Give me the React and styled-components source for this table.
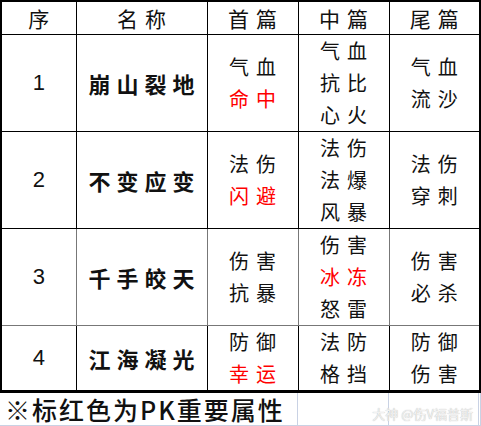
import React from 'react';
import styled, { createGlobalStyle } from 'styled-components';

const GlobalStyle = createGlobalStyle`
  html, body {
    margin: 0;
    padding: 0;
    background: #fff;
  }
  body {
    font-family: "Noto Sans CJK SC", sans-serif;
    color: #111;
  }
`;

const Sheet = styled.div`
  width: 481px;
  height: 426px;
  display: flex;
  flex-direction: column;
  overflow: hidden;
  background: #fff;
`;

const Table = styled.table`
  border-collapse: collapse;
  table-layout: fixed;
  width: 479px;
  flex: none;
  border: 2px solid #000;
  border-bottom-width: 3px;
`;

const Col = styled.col`
  width: ${(p) => p.$w}px;
`;

const Row = styled.tr`
  height: ${(p) => p.$h}px;
`;

const Cell = styled.td`
  border: 1px solid ${(p) => (p.$soft ? '#777' : '#000')};
  padding: 0 0 0 ${(p) => p.$gap}px;
  text-align: center;
  vertical-align: middle;
  font-family: "Noto Sans CJK SC", sans-serif;
  font-size: ${(p) => p.$size}px;
  font-weight: ${(p) => p.$weight};
  letter-spacing: ${(p) => p.$gap}px;
  line-height: 32px;
  color: #111;
`;

const HeadCell = styled(Cell).attrs({ as: 'th' })``;

const Num = styled(Cell)`
  font-family: "Liberation Sans", Arial, sans-serif;
  letter-spacing: 0;
  padding: 0;
`;

const Line = styled.div`
  color: ${(p) => (p.$red ? '#ff0000' : '#111')};
  white-space: nowrap;
`;

const Footer = styled.div`
  position: relative;
  flex: 1;
  display: grid;
  grid-template-columns: 298px 91px 90px 2px;
  min-height: 0;
`;

const GridCell = styled.div`
  border-right: 1px solid #c9d2e4;
  border-bottom: 1px solid #c9d2e4;
  display: flex;
  align-items: center;
  min-height: 0;
`;

const Note = styled.span`
  font-family: "Noto Sans CJK SC", sans-serif;
  font-size: 25px;
  line-height: 30px;
  font-weight: 500;
  letter-spacing: 2px;
  padding-left: 5px;
  white-space: nowrap;
  color: #111;
`;

const Watermark = styled.span`
  position: absolute;
  right: 8px;
  top: 13px;
  font-family: "Noto Sans CJK SC", sans-serif;
  font-size: 13px;
  line-height: 16px;
  color: #f2f2f2;
  text-shadow: 0 0 1px #a8a8a8;
  white-space: nowrap;
`;

const rows = [
  { n: '1', name: '崩山裂地', h: 96, a: [['气血'], ['命中', true]], b: [['气血'], ['抗比'], ['心火']], c: [['气血'], ['流沙']] },
  { n: '2', name: '不变应变', h: 96, a: [['法伤'], ['闪避', true]], b: [['法伤'], ['法爆'], ['风暴']], c: [['法伤'], ['穿刺']] },
  { n: '3', name: '千手皎天', h: 96, soft: true, a: [['伤害'], ['抗暴']], b: [['伤害'], ['冰冻', true], ['怒雷']], c: [['伤害'], ['必杀']] },
  { n: '4', name: '江海凝光', h: 63, a: [['防御'], ['幸运', true]], b: [['法防'], ['格挡']], c: [['防御'], ['伤害']] },
];

const Lines = ({ items }) =>
  items.map(([t, red]) => (
    <Line key={t} $red={red}>
      {t}
    </Line>
  ));

const text = { $size: 20, $weight: 400, $gap: 7 };

const App = () => (
  <Sheet>
    <GlobalStyle />
    <Table>
      <colgroup>
        <Col $w={75} />
        <Col $w={131} />
        <Col $w={91} />
        <Col $w={91} />
        <Col $w={91} />
      </colgroup>
      <thead>
        <Row $h={32}>
          <HeadCell $size={21} $weight={400} $gap={0}>序</HeadCell>
          <HeadCell $size={21} $weight={400} $gap={7}>名称</HeadCell>
          <HeadCell $size={21} $weight={400} $gap={7}>首篇</HeadCell>
          <HeadCell $size={21} $weight={400} $gap={7}>中篇</HeadCell>
          <HeadCell $size={21} $weight={400} $gap={7}>尾篇</HeadCell>
        </Row>
      </thead>
      <tbody>
        {rows.map((r) => (
          <Row key={r.n} $h={r.h}>
            <Num $size={22} $weight={400} $gap={0} $soft={r.soft}>{r.n}</Num>
            <Cell $size={22} $weight={700} $gap={6} $soft={r.soft}>{r.name}</Cell>
            <Cell {...text} $soft={r.soft}><Lines items={r.a} /></Cell>
            <Cell {...text} $soft={r.soft}><Lines items={r.b} /></Cell>
            <Cell {...text} $soft={r.soft}><Lines items={r.c} /></Cell>
          </Row>
        ))}
      </tbody>
    </Table>
    <Footer>
      <GridCell>
        <Note>※标红色为PK重要属性</Note>
      </GridCell>
      <GridCell />
      <GridCell />
      <GridCell />
      <Watermark>大神 @伤V福普斯</Watermark>
    </Footer>
  </Sheet>
);

export default App;
